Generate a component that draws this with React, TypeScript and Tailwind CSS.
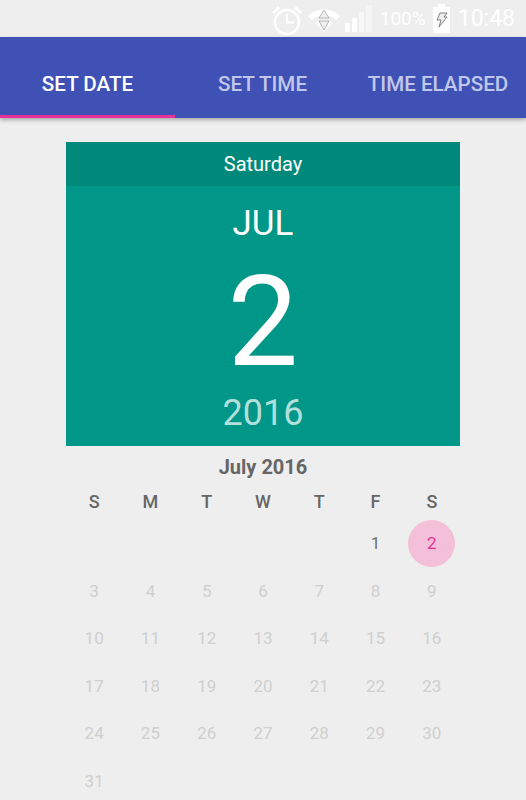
import React from 'react';

const weekDays = ['S', 'M', 'T', 'W', 'T', 'F', 'S'];
const days: (number | null)[] = [
    null, null, null, null, null, 1, 2,
    ...Array.from({ length: 29 }, (_, i) => i + 3),
];

const StatusBar = () => (
    <div className="h-[37px] flex items-center justify-end text-white pr-[11px]">
        {/* alarm */}
        <svg width="32" height="32" viewBox="0 0 32 32" fill="none" stroke="white" className="mr-[5px] mt-[2px]">
            <circle cx="16" cy="18" r="12" strokeWidth="2.4" />
            <path d="M16 10v8.5h7" strokeWidth="2" />
            <path d="M2 9 8 3.5M30 9 24 3.5" strokeWidth="3" />
        </svg>
        {/* wifi with data arrows */}
        <svg width="32" height="26" viewBox="0 0 32 26" className="mr-[5px] mt-[3px]">
            <path d="M0 9C9 0 23 0 32 9L28 13C21 7 11 7 4 13Z" fill="white" />
            <path d="M7 16C12 12 20 12 25 16L16 25Z" fill="white" opacity="0.7" />
            <path d="M16 3l5 8H11ZM16 23l-5-9h10Z" fill="#eeeeee" stroke="#aaaaaa" strokeWidth="0.8" />
        </svg>
        {/* signal */}
        <svg width="30" height="28" viewBox="0 0 30 28" className="mr-[5px] mt-[-1px]">
            <rect x="0" y="19" width="5" height="9" fill="white" />
            <rect x="7" y="14" width="5" height="14" fill="white" />
            <rect x="14" y="8" width="5" height="20" fill="white" opacity="0.5" />
            <rect x="21" y="1" width="6" height="27" fill="white" opacity="0.4" />
        </svg>
        <span className="text-[19px] leading-none mr-[7px]">100%</span>
        {/* battery charging */}
        <svg width="17" height="29" viewBox="0 0 17 29" className="mr-[8px]">
            <path d="M5 0h7v3h5v26H0V3h5Z" fill="white" />
            <path d="M7 9h7l-3 4h3l-8 10 2-7H4Z" fill="#eeeeee" stroke="#666666" strokeWidth="0.8" />
        </svg>
        <span className="text-[23px] leading-none">10:48</span>
    </div>
);

export default function App() {
    return (
        <div
            className="w-[526px] h-[800px] overflow-hidden bg-[#eeeeee]"
            style={{ fontFamily: 'Roboto, sans-serif' }}
        >
            <StatusBar />

            <div className="h-[81px] bg-[#3f51b5] flex shadow-[0_2px_4px_rgba(0,0,0,0.3)] text-[20.6px] font-medium">
                <div className="w-[175px] h-full flex items-center justify-center border-b-[3px] border-[#e5329b] text-white pt-[17px]">
                    SET DATE
                </div>
                <div className="w-[175px] h-full flex items-center justify-center text-[#c1c7ea] pt-[14px]">
                    SET TIME
                </div>
                <div className="w-[176px] h-full flex items-center justify-center text-[#c1c7ea] pt-[14px]">
                    TIME ELAPSED
                </div>
            </div>

            <div className="w-[394px] ml-[66px] mt-[24px] bg-[#009688] h-[304px] flex flex-col items-center text-white">
                <div className="w-full h-[44px] bg-[#00897b] flex items-center justify-center text-[20px]">
                    Saturday
                </div>
                <div className="text-[35px] leading-none mt-[20px] h-[35px]">JUL</div>
                <div className="text-[126px] leading-none mt-[18px] h-[126px]">2</div>
                <div className="text-[36px] leading-none mt-[10px] text-[#b2dfdb]">2016</div>
            </div>

            <div className="w-[394px] ml-[66px]">
                <div className="text-center text-[20px] font-bold text-[#666666] leading-none mt-[11px]">
                    July 2016
                </div>
                <div className="grid grid-cols-7 mt-[16px] text-[18px] font-medium text-[#666666] leading-none">
                    {weekDays.map((d, i) => (
                        <div key={i} className="text-center">{d}</div>
                    ))}
                </div>
                <div className="grid grid-cols-7 auto-rows-[47.5px] mt-[9px] text-[17px]">
                    {days.map((d, i) => (
                        <div key={i} className="flex items-center justify-center">
                            {d === 2 ? (
                                <div className="w-[47px] h-[47px] rounded-full bg-[#f4bfd8] text-[#e5329b] flex items-center justify-center">
                                    2
                                </div>
                            ) : (
                                <span className={d === 1 ? 'text-[#707070]' : 'text-[#cfcfcf]'}>{d}</span>
                            )}
                        </div>
                    ))}
                </div>
            </div>
        </div>
    );
}
